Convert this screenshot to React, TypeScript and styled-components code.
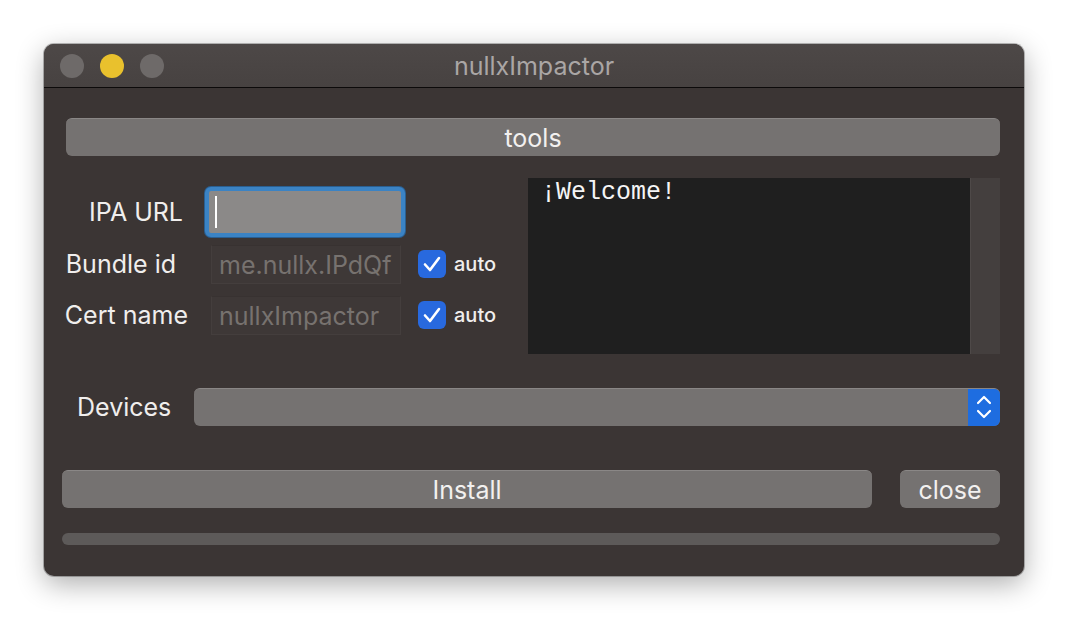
import React from "react";
import styled, { createGlobalStyle } from "styled-components";

const Global = createGlobalStyle`
  html, body { margin: 0; padding: 0; background: #ffffff; }
  body { font-family: Inter, "Noto Sans", "Liberation Sans", sans-serif; }
  * { box-sizing: border-box; }
`;

const Page = styled.div`
  width: 1068px;
  height: 620px;
  padding: 44px 0 0 44px;
  overflow: hidden;
`;

const Window = styled.div`
  width: 980px;
  height: 532px;
  border-radius: 10px;
  background: #3b3534;
  box-shadow: 0 8px 28px rgba(0, 0, 0, 0.32), 0 0 0 1px rgba(0, 0, 0, 0.25);
  overflow: hidden;
  display: flex;
  flex-direction: column;
`;

const TitleBar = styled.div`
  height: 44px;
  flex: none;
  background: linear-gradient(#4d4847, #474241);
  border-bottom: 1.5px solid #0c0a0a;
  display: flex;
  align-items: center;
  position: relative;
  padding-left: 16px;
  gap: 16px;
`;

const Light = styled.span<{ $color: string }>`
  width: 24px;
  height: 24px;
  border-radius: 50%;
  background: ${(p) => p.$color};
`;

const Title = styled.div`
  position: absolute;
  left: 0;
  right: 0;
  top: 0;
  bottom: 0;
  display: flex;
  align-items: center;
  justify-content: center;
  color: #aaa6a5;
  font-size: 25px;
  pointer-events: none;
`;

const Body = styled.div`
  flex: 1;
  display: flex;
  flex-direction: column;
  padding: 30px 24px 0 18px;
`;

const Button = styled.div<{ $width?: string }>`
  height: 38px;
  border-radius: 6px;
  background: #757271;
  border-top: 1px solid #8a8786;
  color: #f2f0ef;
  font-size: 25px;
  display: flex;
  align-items: center;
  justify-content: center;
  width: ${(p) => p.$width || "auto"};
  flex: ${(p) => (p.$width ? "none" : "1")};
`;

const ToolsButton = styled(Button)`
  flex: none;
  margin-left: 4px;
`;

const Middle = styled.div`
  display: flex;
  margin-top: 22px;
  height: 176px;
`;

const Form = styled.div`
  width: 466px;
  display: flex;
  flex-direction: column;
  padding-top: 10px;
`;

const Row = styled.div<{ $mt: number }>`
  display: flex;
  align-items: center;
  margin-top: ${(p) => p.$mt}px;
  height: 38px;
`;

const Label = styled.div<{ $inset: number }>`
  width: 126px;
  padding-right: ${(p) => p.$inset}px;
  text-align: right;
  color: #f0eeed;
  font-size: 25px;
  white-space: nowrap;
`;

const FieldSlot = styled.div`
  margin-left: 23px;
  width: 190px;
  height: 38px;
  position: relative;
`;

const FocusField = styled.div`
  position: absolute;
  left: -6px;
  top: -6px;
  width: 200px;
  height: 50px;
  border-radius: 6px;
  border: 4px solid #3b83c4;
  box-shadow: 0 0 0 1px #2a5f91;
  background: #8b8988;
  display: flex;
  align-items: center;
  padding-left: 6px;
`;

const Caret = styled.span`
  width: 2px;
  height: 32px;
  background: #ffffff;
`;

const Field = styled.div`
  width: 190px;
  height: 39px;
  background: #3e3837;
  border: 1px solid #443e3d;
  border-top-color: #383231;
  color: #77726f;
  font-size: 25px;
  display: flex;
  align-items: center;
  padding-left: 7px;
  white-space: nowrap;
  overflow: hidden;
`;

const Check = styled.span`
  margin-left: 17px;
  width: 28px;
  height: 28px;
  border-radius: 6px;
  background: #2869de;
  display: flex;
  align-items: center;
  justify-content: center;
`;

const CheckText = styled.span`
  margin-left: 8px;
  color: #f0eeed;
  font-size: 20px;
  font-weight: 500;
`;

const Log = styled.div`
  flex: 1;
  display: flex;
  height: 176px;
`;

const LogText = styled.div`
  flex: 1;
  background: #1f1f1f;
  color: #f5f5f5;
  font-family: "Liberation Mono", "DejaVu Sans Mono", monospace;
  font-size: 25px;
  padding: 0 0 0 13px;
  line-height: 30px;
`;

const Scroll = styled.div`
  width: 30px;
  background: #443f3e;
  border-left: 1px solid #4e4948;
`;

const DevicesRow = styled.div`
  display: flex;
  align-items: center;
  margin-top: 34px;
`;

const DevLabel = styled.div`
  width: 132px;
  padding-left: 15px;
  color: #f0eeed;
  font-size: 25px;
`;

const Select = styled.div`
  flex: 1;
  height: 38px;
  border-radius: 6px;
  background: #757271;
  border-top: 1px solid #8a8786;
  display: flex;
  justify-content: flex-end;
  overflow: hidden;
`;

const SelectArrow = styled.div`
  width: 32px;
  background: #1e6de0;
  display: flex;
  align-items: center;
  justify-content: center;
  margin-top: -1px;
`;

const ActionRow = styled.div`
  display: flex;
  margin-top: 44px;
  gap: 28px;
`;

const Progress = styled.div`
  margin-top: 25px;
  height: 12px;
  border-radius: 6px;
  background: #5d5a59;
`;

const CheckIcon = () => (
  <svg width="20" height="18" viewBox="0 0 20 18">
    <path d="M3 9.5 L8 15 L17 3" fill="none" stroke="#fff" strokeWidth="2.6" strokeLinecap="round" strokeLinejoin="round" />
  </svg>
);

const Chevrons = () => (
  <svg width="18" height="28" viewBox="0 0 18 28">
    <path d="M3 10 L9 4 L15 10" fill="none" stroke="#fff" strokeWidth="2.2" strokeLinecap="round" strokeLinejoin="round" />
    <path d="M3 18 L9 24 L15 18" fill="none" stroke="#fff" strokeWidth="2.2" strokeLinecap="round" strokeLinejoin="round" />
  </svg>
);

export default function App() {
  return (
    <Page>
      <Global />
      <Window>
        <TitleBar>
          <Light $color="#6e6a69" />
          <Light $color="#e9c12d" />
          <Light $color="#6e6a69" />
          <Title>nullxImpactor</Title>
        </TitleBar>
        <Body>
          <ToolsButton>tools</ToolsButton>
          <Middle>
            <Form>
              <Row $mt={5}>
                <Label $inset={5}>IPA URL</Label>
                <FieldSlot>
                  <FocusField>
                    <Caret />
                  </FocusField>
                </FieldSlot>
              </Row>
              <Row $mt={14}>
                <Label $inset={12}>Bundle id</Label>
                <FieldSlot>
                  <Field>me.nullx.IPdQf</Field>
                </FieldSlot>
                <Check>
                  <CheckIcon />
                </Check>
                <CheckText>auto</CheckText>
              </Row>
              <Row $mt={13}>
                <Label $inset={0}>Cert name</Label>
                <FieldSlot>
                  <Field>nullxImpactor</Field>
                </FieldSlot>
                <Check>
                  <CheckIcon />
                </Check>
                <CheckText>auto</CheckText>
              </Row>
            </Form>
            <Log>
              <LogText>¡Welcome!</LogText>
              <Scroll />
            </Log>
          </Middle>
          <DevicesRow>
            <DevLabel>Devices</DevLabel>
            <Select>
              <SelectArrow>
                <Chevrons />
              </SelectArrow>
            </Select>
          </DevicesRow>
          <ActionRow>
            <Button>Install</Button>
            <Button $width="100px">close</Button>
          </ActionRow>
          <Progress />
        </Body>
      </Window>
    </Page>
  );
}
